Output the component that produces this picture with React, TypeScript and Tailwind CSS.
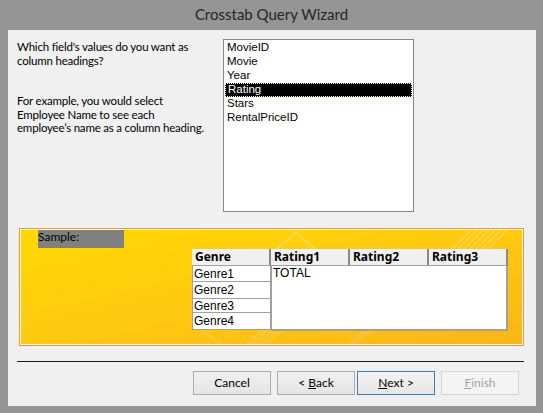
import React from 'react';

const fields = ['MovieID', 'Movie', 'Year', 'Rating', 'Stars', 'RentalPriceID'];
const genres = [
  { name: 'Genre1', h: 'h-[16px]' },
  { name: 'Genre2', h: 'h-[17px]' },
  { name: 'Genre3', h: 'h-[14px]' },
  { name: 'Genre4', h: 'h-[17px]' },
];

const HeaderCell: React.FC<{ label: string; w: string }> = ({ label, w }) => (
  <div
    className={`${w} h-[17px] bg-[#f0f0f0] border-r-2 border-r-[#8a8a8a] border-b border-b-[#a0a0a0] pl-[3px] flex items-center text-[12px] font-bold text-black`}
    style={{ fontFamily: '"Noto Sans", sans-serif' }}
  >
    {label}
  </div>
);

const WizButton: React.FC<{
  children: React.ReactNode;
  variant?: 'normal' | 'default' | 'disabled';
}> = ({ children, variant = 'normal' }) => {
  const look =
    variant === 'default'
      ? 'border-[#3c7fb1] bg-gradient-to-b from-[#f3f3f3] to-[#e6e6e6] text-black'
      : variant === 'disabled'
      ? 'border-[#d5d5d5] bg-[#f4f4f4] text-[#a3a3a3]'
      : 'border-[#acacac] bg-gradient-to-b from-[#f0f0f0] to-[#e5e5e5] text-black';
  return (
    <button
      className={`w-[78px] h-[24px] border ${look} text-[12px] flex items-center justify-center`}
    >
      {children}
    </button>
  );
};

export default function App() {
  return (
    <div
      className="w-[543px] h-[413px] bg-[#959595] flex flex-col overflow-hidden"
      style={{ fontFamily: 'Lato, "Noto Sans", sans-serif' }}
    >
      {/* title bar */}
      <div className="h-[30px] flex items-center justify-center text-[15px] text-[#262626] pb-[1px]">
        Crosstab Query Wizard
      </div>

      {/* client area */}
      <div className="ml-[8px] w-[528px] h-[376px] bg-[#f0f0f0] flex flex-col">
        <div className="flex pt-[9px]">
          <div className="w-[215px] pl-[9px] text-[11.5px] tracking-[-0.2px] leading-[14px] text-black whitespace-nowrap">
            <p className="mt-[1px]">
              Which field's values do you want as
              <br />
              column headings?
            </p>
            <p className="mt-[26px] leading-[13.5px]">
              For example, you would select
              <br />
              Employee Name to see each
              <br />
              employee’s name as a column heading.
            </p>
          </div>
          <div className="w-[191px] h-[173px] bg-white border border-[#828790] pt-[1px] px-[1px]">
            {fields.map((f) => (
              <div
                key={f}
                className={`h-[14px] pl-[2px] flex items-center text-[11.5px] ${
                  f === 'Rating'
                    ? 'bg-black text-white border border-dotted border-[#ffffcc] pl-[1px]'
                    : 'text-black'
                }`}
                style={{ fontFamily: '"Liberation Sans", "DejaVu Sans", sans-serif' }}
              >
                {f}
              </div>
            ))}
          </div>
        </div>

        {/* sample panel */}
        <div className="ml-[11px] mt-[16px] w-[505px] h-[118px] border border-[#f7931e]">
          <div className="relative w-full h-full border border-white bg-gradient-to-br from-[#ffd800] via-[#ffc910] to-[#f9b519] overflow-hidden">
            <svg
              className="absolute inset-0"
              width="501"
              height="114"
              viewBox="0 0 501 114"
              fill="none"
            >
              <path d="M255 20 L275 2 L295 20" stroke="#ffffff" strokeOpacity="0.25" strokeWidth="2" />
              <path d="M260 20 L275 6 L290 20" stroke="#ffffff" strokeOpacity="0.12" strokeWidth="1" />
              {[0, 6, 12, 18, 24, 30, 36].map((d) => (
                <line
                  key={d}
                  x1={430 + d}
                  y1={20}
                  x2={450 + d}
                  y2={0}
                  stroke="#ffffff"
                  strokeOpacity="0.18"
                  strokeWidth="2"
                />
              ))}
              {[0, 5, 10, 15, 20].map((d) => (
                <line
                  key={d}
                  x1={226 + d}
                  y1={114}
                  x2={246 + d}
                  y2={96}
                  stroke="#ffffff"
                  strokeOpacity="0.15"
                  strokeWidth="2"
                />
              ))}
              <path d="M330 114 L400 60" stroke="#ffffff" strokeOpacity="0.1" strokeWidth="6" />
              <path d="M180 100 L200 114" stroke="#ffffff" strokeOpacity="0.12" strokeWidth="3" />
            </svg>

            <div className="relative flex flex-col">
              <div className="ml-[17px] w-[86px] h-[18px] bg-[#808080] text-[12px] leading-[13px] text-black">
                Sample:
              </div>
              <div
                className="ml-[171px] mt-[1px] flex"
                style={{ fontFamily: '"Liberation Sans", sans-serif' }}
              >
                <div className="flex flex-col w-[79px]">
                  <HeaderCell label="Genre" w="w-[79px]" />
                  {genres.map((g) => (
                    <div
                      key={g.name}
                      className={`${g.h} bg-white border border-t-0 border-[#a0a0a0] pl-[1px] flex items-center text-[12px] text-black`}
                    >
                      {g.name}
                    </div>
                  ))}
                </div>
                <div className="flex flex-col">
                  <div className="flex">
                    <HeaderCell label="Rating1" w="w-[79px]" />
                    <HeaderCell label="Rating2" w="w-[79px]" />
                    <HeaderCell label="Rating3" w="w-[79px]" />
                  </div>
                  <div className="w-[237px] h-[65px] bg-white border-r-2 border-b-2 border-[#a0a0a0] border-l border-l-[#a0a0a0] pl-[1px] text-[12px] leading-[14px] text-black">
                    TOTAL
                  </div>
                </div>
              </div>
            </div>
          </div>
        </div>

        {/* separator */}
        <div className="ml-[9px] mt-[15px] w-[507px] h-[1px] bg-[#1a1a1a]" />

        {/* buttons */}
        <div className="mt-[9px] ml-[185px] flex">
          <WizButton>Cancel</WizButton>
          <div className="ml-[6px]">
            <WizButton>
              &lt;&nbsp;<u>B</u>ack
            </WizButton>
          </div>
          <div className="ml-[2px]">
            <WizButton variant="default">
              <u>N</u>ext &gt;
            </WizButton>
          </div>
          <div className="ml-[6px]">
            <WizButton variant="disabled">
              <u>F</u>inish
            </WizButton>
          </div>
        </div>
      </div>
    </div>
  );
}
